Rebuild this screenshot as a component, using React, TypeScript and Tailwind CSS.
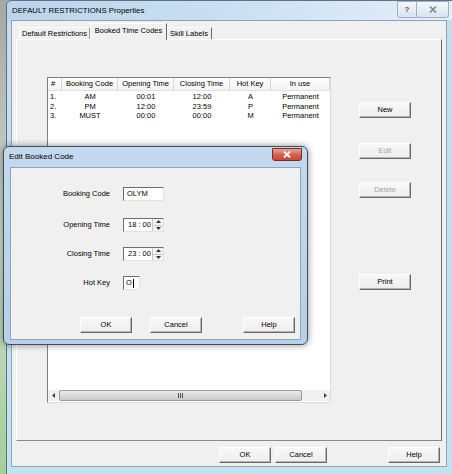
import React from 'react';

const F = "font-['Liberation_Sans',Arial,sans-serif]";

type Row = { n: string; code: string; open: string; close: string; key: string; use: string };

const rows: Row[] = [
  { n: '1.', code: 'AM', open: '00:01', close: '12:00', key: 'A', use: 'Permanent' },
  { n: '2.', code: 'PM', open: '12:00', close: '23:59', key: 'P', use: 'Permanent' },
  { n: '3.', code: 'MUST', open: '00:00', close: '00:00', key: 'M', use: 'Permanent' },
];

const cols = ['w-[14px]', 'w-[56px]', 'w-[56px]', 'w-[56px]', 'w-[41px]', 'w-[59px]'];

function WinButton({ label, disabled, className = '' }: { label: string; disabled?: boolean; className?: string }) {
  return (
    <button
      className={`flex items-center justify-center h-[16px] w-[52px] bg-gradient-to-b from-[#f8f8f8] to-[#ededed] border border-t-[#fdfdfd] border-l-[#fdfdfd] border-r-[#696969] border-b-[#696969] shadow-[inset_-1px_-1px_0_#b4b4b4] ${
        disabled ? 'text-[#a6a6a6]' : 'text-black'
      } ${className}`}
    >
      {label}
    </button>
  );
}

function Spin() {
  return (
    <div className="flex flex-col w-[11px] h-full border-l border-[#c8c8c8]">
      <div className="flex-1 flex items-center justify-center bg-[#f2f2f2] border-b border-[#c8c8c8]">
        <svg width="5" height="3" viewBox="0 0 5 3"><path d="M0 3 L2.5 0 L5 3 Z" fill="#333" /></svg>
      </div>
      <div className="flex-1 flex items-center justify-center bg-[#f2f2f2]">
        <svg width="5" height="3" viewBox="0 0 5 3"><path d="M0 0 L2.5 3 L5 0 Z" fill="#333" /></svg>
      </div>
    </div>
  );
}

const inputCls =
  'flex items-center h-[14px] bg-white border border-t-[#6d6d6d] border-l-[#6d6d6d] border-r-[#e2e2e2] border-b-[#e2e2e2]';

function FieldRow({ label, children, className = '' }: { label: string; children: React.ReactNode; className?: string }) {
  return (
    <div className={`flex items-center ${className}`}>
      <div className="w-[99px] text-right">{label}</div>
      <div className="ml-[13px]">{children}</div>
    </div>
  );
}

function EditDialog() {
  return (
    <div className="absolute left-[3px] top-[146px] w-[305px] h-[199px] flex flex-col rounded-[6px] border border-[#3f4f62] bg-gradient-to-b from-[#c3d9ef] to-[#b7cfe7] shadow-[0_0_7px_rgba(0,0,0,0.45)]">
      <div className="h-[20px] flex items-center pl-[5px] relative">
        <span className="text-[8px]">Edit Booked Code</span>
        <div className="absolute right-[5px] top-[1px] w-[30px] h-[13px] rounded-b-[3px] border border-[#7a2b22] bg-gradient-to-b from-[#e9a596] via-[#d4634f] to-[#c24a34] flex items-center justify-center">
          <svg width="8" height="7" viewBox="0 0 8 7">
            <path d="M1 0.5 L7 6.5 M7 0.5 L1 6.5" stroke="#fff" strokeWidth="1.8" />
          </svg>
        </div>
      </div>
      <div className="flex-1 mx-[6px] mb-[4px] border border-[#8ea6bd] bg-[#f0f0f0] flex flex-col">
        <FieldRow label="Booking Code" className="mt-[19px]">
          <div className={`${inputCls} w-[41px] pl-[3px]`}>OLYM</div>
        </FieldRow>
        <FieldRow label="Opening Time" className="mt-[17px]">
          <div className={`${inputCls} w-[41px]`}>
            <span className="flex-1 pl-[4px] whitespace-pre">18 : 00</span>
            <Spin />
          </div>
        </FieldRow>
        <FieldRow label="Closing Time" className="mt-[15px]">
          <div className={`${inputCls} w-[41px]`}>
            <span className="flex-1 pl-[4px] whitespace-pre">23 : 00</span>
            <Spin />
          </div>
        </FieldRow>
        <FieldRow label="Hot Key" className="mt-[15px]">
          <div className={`${inputCls} w-[17px] pl-[2px]`}>
            <span>O</span>
            <span className="w-px h-[9px] bg-black ml-px" />
          </div>
        </FieldRow>
        <div className="flex mt-[27px] pl-[69px]">
          <WinButton label="OK" />
          <WinButton label="Cancel" className="ml-[18px]" />
          <WinButton label="Help" className="ml-[41px]" />
        </div>
      </div>
    </div>
  );
}

function ListView() {
  return (
    <div className="w-[284px] h-[326px] flex flex-col bg-white border border-t-[#7f7f7f] border-l-[#7f7f7f] border-r-[#dcdcdc] border-b-[#dcdcdc]">
      <div className="flex h-[13px] bg-gradient-to-b from-white to-[#f3f3f3] border-b border-[#e0e0e0]">
        {['#', 'Booking Code', 'Opening Time', 'Closing Time', 'Hot Key', 'In use'].map((h, i) => (
          <div
            key={h}
            className={`${cols[i]} flex items-center ${i === 0 ? 'justify-start pl-[3px]' : 'justify-center'} border-r border-[#d5d5d5]`}
          >
            {h}
          </div>
        ))}
      </div>
      <div className="pt-[1px]">
        {rows.map((r) => (
          <div key={r.n} className="flex h-[9.5px] items-center">
            <div className={`${cols[0]} pl-[2px]`}>{r.n}</div>
            <div className={`${cols[1]} text-center`}>{r.code}</div>
            <div className={`${cols[2]} text-center`}>{r.open}</div>
            <div className={`${cols[3]} text-center`}>{r.close}</div>
            <div className={`${cols[4]} text-center`}>{r.key}</div>
            <div className={`${cols[5]} text-center`}>{r.use}</div>
          </div>
        ))}
      </div>
      <div className="flex-1" />
      <div className="flex h-[11px] mb-[1px] bg-[#f0f0f0]">
        <div className="w-[11px] flex items-center justify-center">
          <svg width="3" height="5" viewBox="0 0 3 5"><path d="M3 0 L0 2.5 L3 5 Z" fill="#444" /></svg>
        </div>
        <div className="w-[243px] flex items-center justify-center rounded-[2px] border border-[#9a9a9a] bg-gradient-to-b from-[#ececec] to-[#c9c9c9]">
          <svg width="6" height="5" viewBox="0 0 6 5">
            <path d="M0.5 0 V5 M2.5 0 V5 M4.5 0 V5" stroke="#555" strokeWidth="1" />
          </svg>
        </div>
        <div className="flex-1" />
        <div className="w-[10px] flex items-center justify-center">
          <svg width="3" height="5" viewBox="0 0 3 5"><path d="M0 0 L3 2.5 L0 5 Z" fill="#444" /></svg>
        </div>
      </div>
    </div>
  );
}

export default function App() {
  return (
    <div
      className={`relative w-[452px] h-[474px] overflow-hidden bg-gradient-to-b from-[#a6a6a6] via-[#cfdcc9] to-[#a4cf99] text-[7.5px] leading-none text-black ${F}`}
    >
      {/* main window */}
      <div className="ml-[6px] w-[452px] h-[480px] rounded-t-[6px] border border-[#5d7286] bg-gradient-to-b from-[#c5dbef] to-[#c2e2ef]">
        <div className="h-[19px] flex items-center pl-[5px] pr-[8px] bg-gradient-to-r from-[#bcd4eb] via-[#cadff2] to-[#e6f0f9] rounded-t-[6px]">
          <span className="text-[7.8px]">DEFAULT RESTRICTIONS Properties</span>
          <div className="ml-auto flex self-start">
            <div className="w-[20px] h-[17px] flex items-center justify-center border border-[#9fb0c2] rounded-bl-[3px] bg-gradient-to-b from-[#f4f7fb] to-[#d9e4ef] text-[#555] text-[8px] font-bold">
              ?
            </div>
            <div className="w-[32px] h-[17px] flex items-center justify-center border border-l-0 border-[#9fb0c2] rounded-br-[3px] bg-gradient-to-b from-[#f4f7fb] to-[#d9e4ef]">
              <svg width="8" height="7" viewBox="0 0 8 7">
                <path d="M1 0.5 L7 6.5 M7 0.5 L1 6.5" stroke="#7d8794" strokeWidth="1.6" />
              </svg>
            </div>
          </div>
        </div>

        <div className="ml-[4px] w-[436px] h-[447px] border border-[#8fa3b7] bg-[#f0f0f0] flex flex-col">
          {/* tabs */}
          <div className="h-[18px] flex items-end pl-[7px]">
            <div className="h-[12px] w-[71px] flex items-center justify-center border border-b-0 border-t-white border-l-white border-r-[#9a9a9a]">
              Default Restrictions
            </div>
            <div className="relative z-10 -mb-px h-[17px] w-[77px] flex items-center justify-center bg-[#f0f0f0] border border-b-0 border-t-white border-l-white border-r-[#696969] pb-[2px]">
              Booked Time Codes
            </div>
            <div className="h-[12px] w-[45px] flex items-center justify-center border border-b-0 border-t-white border-l-0 border-r-[#696969]">
              Skill Labels
            </div>
          </div>

          {/* panel */}
          <div className="ml-[4px] w-[426px] h-[402px] border border-t-white border-l-white border-r-[#696969] border-b-[#8a8a8a] flex pl-[30px] pt-[37px]">
            <ListView />
            <div className="ml-[28px] flex flex-col">
              <WinButton label="New" className="mt-[25px]" />
              <WinButton label="Edit" disabled className="mt-[25px]" />
              <WinButton label="Delete" disabled className="mt-[23px]" />
              <WinButton label="Print" className="mt-[76px]" />
            </div>
          </div>

          {/* bottom buttons */}
          <div className="flex mt-[6px] pl-[207px]">
            <WinButton label="OK" />
            <WinButton label="Cancel" className="ml-[4px]" />
            <WinButton label="Help" className="ml-[61px]" />
          </div>
        </div>
      </div>

      <EditDialog />
    </div>
  );
}
